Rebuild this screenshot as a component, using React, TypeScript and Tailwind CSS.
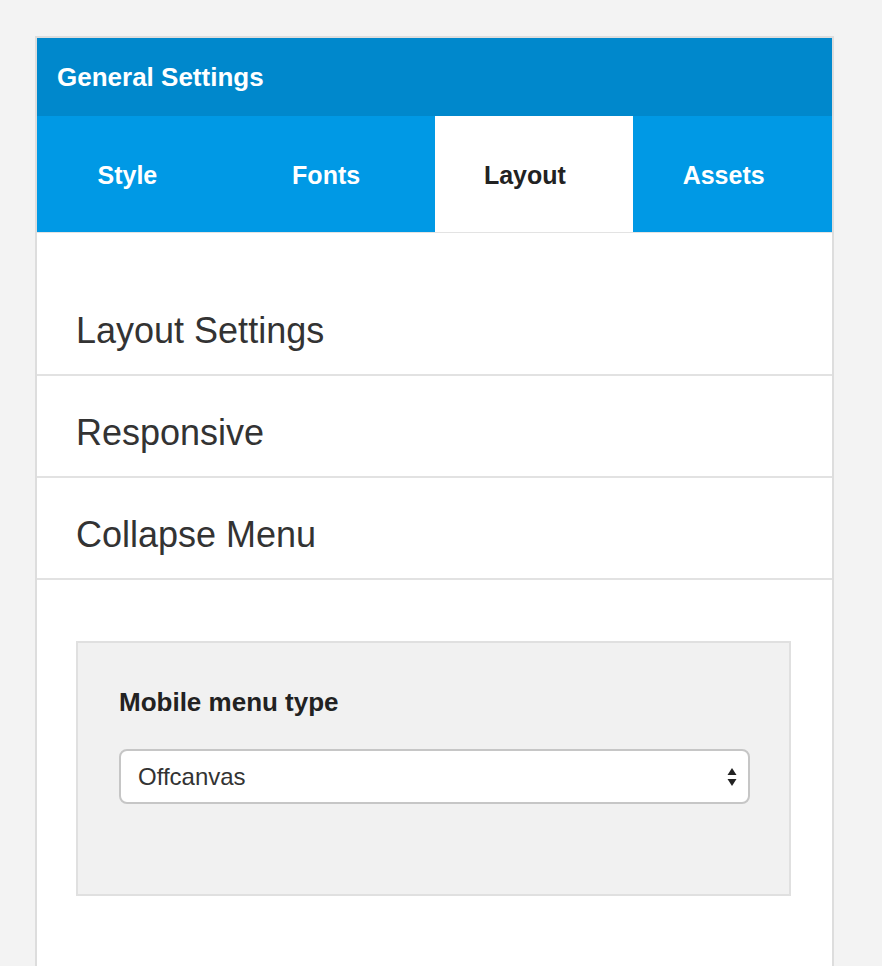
import React from 'react';

const tabs = ['Style', 'Fonts', 'Layout', 'Assets'];
const sections = ['Layout Settings', 'Responsive', 'Collapse Menu'];

const SelectArrows: React.FC = () => (
  <svg width="10" height="20" viewBox="0 0 10 20" className="shrink-0">
    <path d="M5 1 L9.5 8 L0.5 8 Z" fill="#222" />
    <path d="M0.5 12 L9.5 12 L5 19 Z" fill="#222" />
  </svg>
);

export default function App() {
  const active = 'Layout';

  return (
    <div className="min-h-screen bg-[#f3f3f3] pt-[36px] pl-[35px] font-['Liberation_Sans',Arial,sans-serif] overflow-hidden">
      <div className="w-[799px] min-h-[960px] bg-white border-2 border-b-0 border-[#dddddd]">
        {/* Header */}
        <div className="h-[78px] bg-[#0088cc] flex items-center px-[20px]">
          <h1 className="text-white font-bold text-[26px] leading-none">General Settings</h1>
        </div>

        {/* Tabs */}
        <div className="grid grid-cols-4 h-[117px] bg-[#0099e5] border-b border-[#e3e3e3]">
          {tabs.map((t) => (
            <div
              key={t}
              className={`flex items-center justify-center text-[25px] font-bold pr-[18px] pt-[4px] ${
                t === active ? 'bg-white text-[#222]' : 'text-white'
              }`}
            >
              {t}
            </div>
          ))}
        </div>

        {/* Sections */}
        <div className="pt-[41px]">
          {sections.map((s) => (
            <div
              key={s}
              className="h-[102px] flex items-center pl-[39px] border-b-2 border-[#e2e2e2] text-[36px] text-[#333] pt-[14px]"
            >
              {s}
            </div>
          ))}
        </div>

        {/* Collapse menu body */}
        <div className="pl-[39px] pr-[41px] pt-[61px]">
          <div className="bg-[#f1f1f1] border-2 border-[#e0e0e0] pt-[45px] pb-[90px] pl-[41px] pr-[39px]">
            <label className="block text-[26px] font-bold text-[#222] leading-[28px]">Mobile menu type</label>
            <div className="mt-[33px] h-[55px] bg-white border-2 border-[#c6c6c6] rounded-[8px] flex items-center justify-between pl-[17px] pr-[11px]">
              <span className="text-[24px] text-[#333]">Offcanvas</span>
              <SelectArrows />
            </div>
          </div>
        </div>
      </div>
    </div>
  );
}
